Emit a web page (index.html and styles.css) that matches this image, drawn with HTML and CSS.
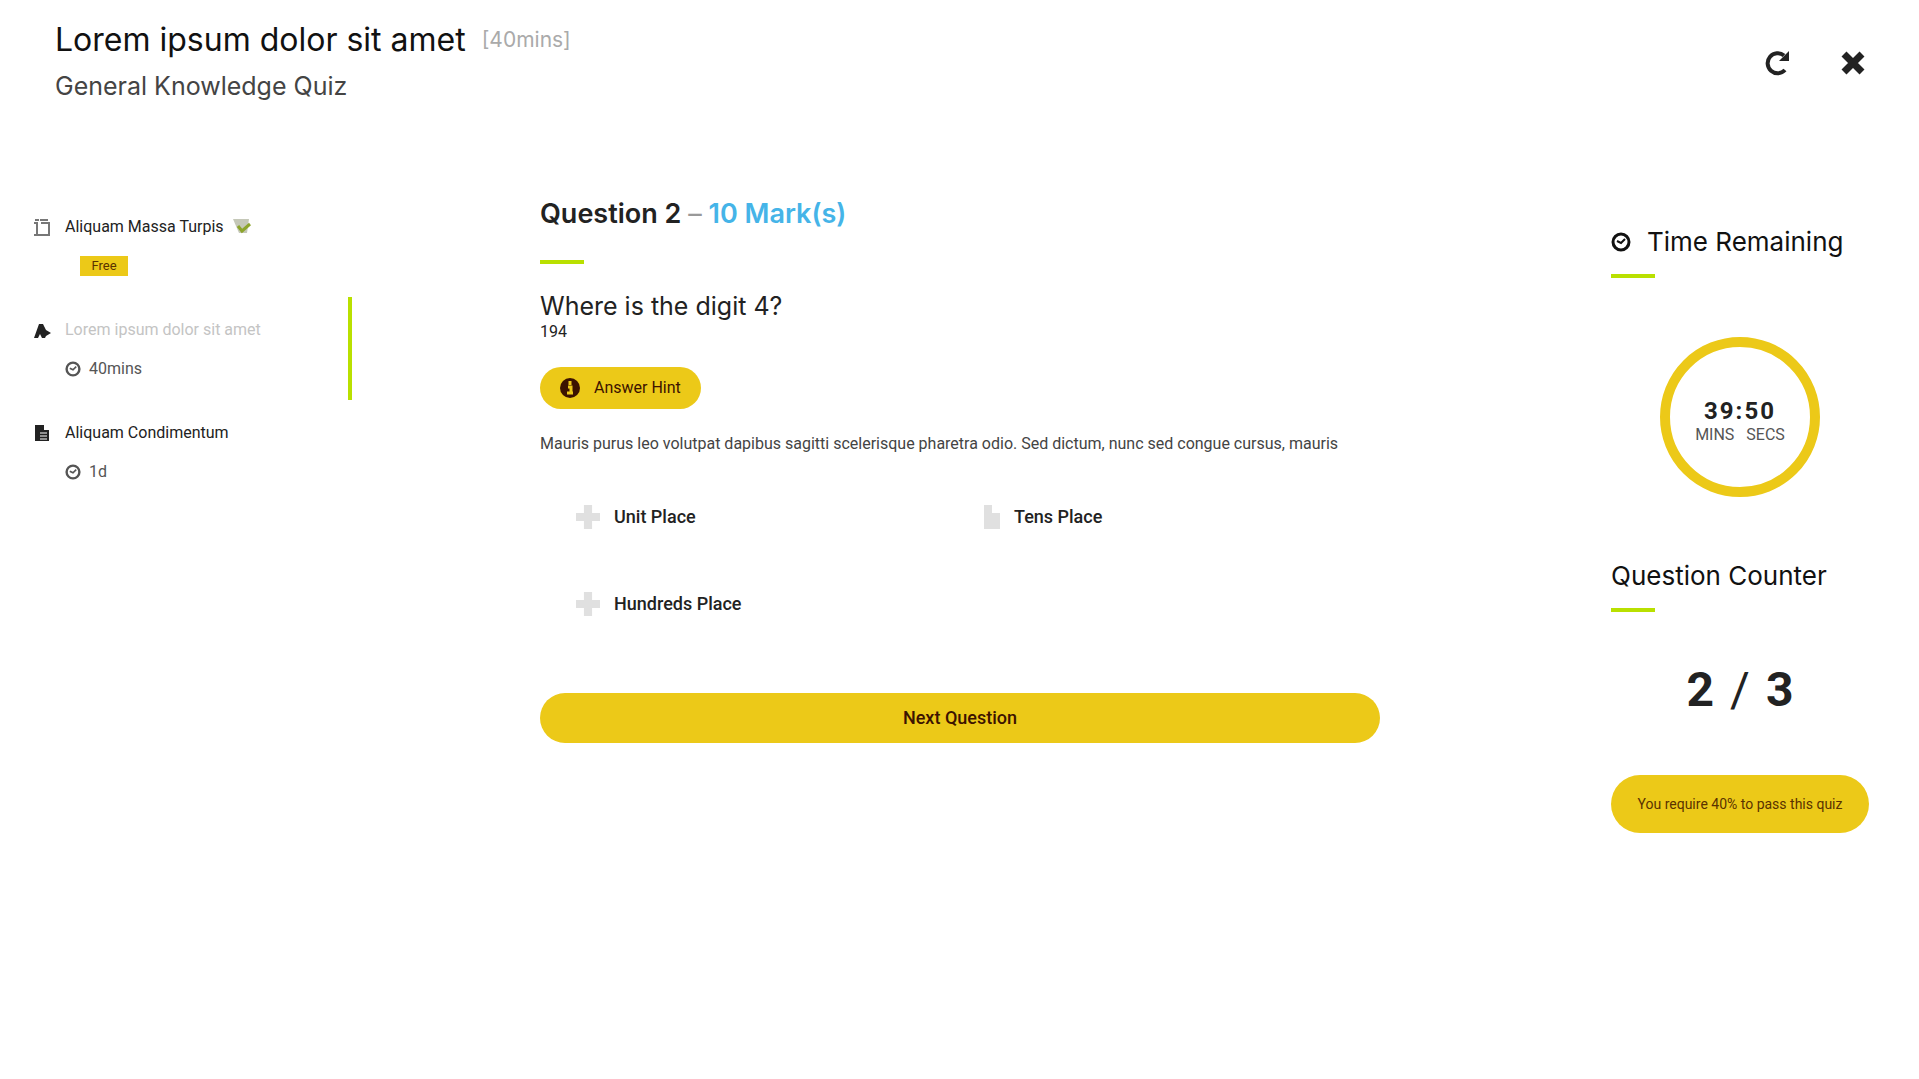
FILE: index.html
```html
<!DOCTYPE html>
<html lang="en">
<head>
<meta charset="utf-8">
<meta name="viewport" content="width=device-width, initial-scale=1">
<title>General Knowledge Quiz</title>
<link rel="stylesheet" href="styles.css">
</head>
<body>
<svg class="sprite" aria-hidden="true">
  <symbol id="clock" viewBox="0 0 20 20"><circle cx="10" cy="10" r="8" fill="none" stroke="currentColor" stroke-width="3"/><path d="M6 9l4 2 4-4" fill="none" stroke="currentColor" stroke-width="2"/></symbol>
</svg>
<header class="topbar">
  <div>
    <h1 class="course">Lorem ipsum dolor sit amet <span class="duration">[40mins]</span></h1>
    <p class="quiz-name">General Knowledge Quiz</p>
  </div>
  <div class="actions">
    <button class="icon-btn" aria-label="Reload"><svg width="28" height="28" viewBox="0 0 28 28"><path d="M22 21A10 10 0 1 1 21 6.500" fill="none" stroke="currentColor" stroke-width="4"/><path d="M26 2v10H16z" fill="currentColor"/></svg></button>
    <button class="icon-btn" aria-label="Close"><svg width="28" height="28" viewBox="0 0 28 28"><path d="M5 5l18 18M23 5L5 23" fill="none" stroke="currentColor" stroke-width="7"/></svg></button>
  </div>
</header>
<div class="layout">
  <nav class="units">
    <a class="unit" href="#">
      <svg class="unit-icon" width="18" height="18" viewBox="0 0 18 18"><path d="M1 5h3v12M1 17h15V5H8M2 2h4M7 2h8" fill="none" stroke="#777" stroke-width="2"/></svg>
      <span class="unit-title">Aliquam Massa Turpis</span>
      <svg class="done" width="20" height="20" viewBox="0 0 20 20"><path d="M1 1h16l-2 14H7z" fill="#c5c8b8"/><path d="M6 8l4 5 8-7" fill="none" stroke="#8da52c" stroke-width="3"/></svg>
      <span class="badge">Free</span>
    </a>
    <a class="unit current" href="#">
      <svg class="unit-icon" width="18" height="18" viewBox="0 0 18 18"><path d="M1 17L6 3h4l3 6 5 3-5 3-1 2H9l-2-4-2 4z" fill="#222"/></svg>
      <span class="unit-title muted">Lorem ipsum dolor sit amet</span>
      <span class="unit-time"><svg width="16" height="16"><use href="#clock"/></svg>40mins</span>
    </a>
    <a class="unit" href="#">
      <svg class="unit-icon" width="18" height="18" viewBox="0 0 18 18"><path d="M2 1h9v5h5v11H2z" fill="#222"/><path d="M7 9h7M7 12h7M7 15h7" stroke="#fff"/></svg>
      <span class="unit-title">Aliquam Condimentum</span>
      <span class="unit-time"><svg width="16" height="16"><use href="#clock"/></svg>1d</span>
    </a>
  </nav>
  <main class="question">
    <h2 class="question-title">Question 2 <span class="dash">–</span> <span class="marks">10 Mark(s)</span></h2>
    <h3 class="prompt">Where is the digit 4?</h3>
    <p class="value">194</p>
    <button class="hint"><svg width="20" height="20" viewBox="0 0 20 20"><circle cx="10" cy="10" r="10" fill="#3c1300"/><path d="M10 3v4M8 9h3v6M7 15h6" fill="none" stroke="#ecc918" stroke-width="3"/></svg>Answer Hint</button>
    <p class="hint-text">Mauris purus leo volutpat dapibus sagitti scelerisque pharetra odio. Sed dictum, nunc sed congue cursus, mauris</p>
    <form class="answers">
      <label class="answer"><input class="choice" type="radio" name="place">Unit Place</label>
      <label class="answer"><input class="choice notch" type="radio" name="place">Tens Place</label>
      <label class="answer"><input class="choice" type="radio" name="place">Hundreds Place</label>
    </form>
    <button class="next">Next Question</button>
  </main>
  <aside class="status">
    <h2 class="status-title"><svg width="20" height="20"><use href="#clock"/></svg>Time Remaining</h2>
    <div class="timer">
      <div class="time">39:50</div>
      <div class="time-units"><span>MINS</span><span>SECS</span></div>
    </div>
    <h2 class="status-title">Question Counter</h2>
    <p class="counter"><b>2</b><span>/</span><b>3</b></p>
    <p class="pass">You require 40% to pass this quiz</p>
  </aside>
</div>
</body>
</html>
```

FILE: styles.css
```css
* { box-sizing: border-box; }
body { margin: 0; background: #fff; color: #222; font: 16px/24px Roboto, sans-serif; }
h1, h2, h3, p { margin: 0; font-family: Inter, sans-serif; font-weight: 400; }
button { border: 0; padding: 0; color: inherit; font: inherit; cursor: pointer; }
a { color: inherit; text-decoration: none; }
svg { flex: none; }
.sprite { position: absolute; width: 0; height: 0; }

.topbar { display: flex; justify-content: space-between; align-items: center; padding: 20px 52px 0 55px; }
.course { display: flex; align-items: center; gap: 16px; font-size: 32px; line-height: 40px; color: #111; }
.duration { font-size: 21px; color: #aaa; }
.quiz-name { padding-top: 8px; font-size: 25px; line-height: 36px; color: #444; }
.actions { display: flex; gap: 48px; padding-top: 2px; }
.icon-btn { display: flex; background: none; }

.layout { display: grid; grid-template-columns: 352px minmax(0, 1fr) 258px; align-items: start; padding: 90px 50px 40px 0; }

.unit { display: grid; grid-template-columns: 18px auto 1fr; column-gap: 14px; align-content: start; height: 103px; padding: 20px 0 0 33px; }
.current { border-right: 4px solid #b9e000; }
.unit-icon { margin-top: 4px; }
.unit-title { font-size: 16px; line-height: 26px; }
.muted { color: #c4c4c4; }
.done { margin: 4px 0 0 -6px; }
.badge { grid-column: 2; justify-self: start; width: 48px; height: 20px; margin: 16px 0 0 15px; background: #ecc918; font-size: 13px; line-height: 20px; text-align: center; color: #5a3200; }
.unit-time { grid-column: 2; display: flex; align-items: center; gap: 8px; padding-top: 14px; line-height: 24px; color: #555; }

.question { padding: 0 231px 0 188px; }
.question-title { font-size: 27px; line-height: 40px; font-weight: 600; }
.dash { font-weight: 400; color: #999; }
.marks { color: #45b4e8; }
.question-title::after, .status-title::after { content: ""; display: block; width: 44px; height: 4px; background: #b9e000; }
.question-title::after { margin-top: 26px; }
.prompt { padding-top: 24px; font-size: 25px; line-height: 36px; }
.value { font: 16px/16px Roboto, sans-serif; }
.hint { display: flex; align-items: center; gap: 14px; height: 42px; margin-top: 27px; padding: 0 20px; border-radius: 21px; background: #ecc918; font-size: 16px; color: #3c1300; }
.hint-text { padding-top: 23px; font: 16px/24px Roboto, sans-serif; color: #444; }
.answers { display: grid; grid-template-columns: 408px 1fr; row-gap: 63px; padding: 49px 0 0 36px; }
.answer { display: flex; align-items: center; gap: 14px; font-size: 18px; line-height: 24px; font-weight: 500; }
.choice { appearance: none; width: 24px; height: 24px; margin: 0; background: #e0e0e0; clip-path: polygon(33% 0, 67% 0, 67% 33%, 100% 33%, 100% 67%, 67% 67%, 67% 100%, 33% 100%, 33% 67%, 0 67%, 0 33%, 33% 33%); }
.notch { width: 16px; clip-path: polygon(0 0, 50% 0, 50% 33%, 100% 33%, 100% 100%, 0 100%); }
.next { width: 100%; height: 50px; margin-top: 77px; border-radius: 25px; background: #ecc918; font-size: 18px; font-weight: 500; color: #3c1300; }

.status { padding-top: 30px; }
.status-title { display: flex; flex-wrap: wrap; align-items: center; column-gap: 16px; font-size: 26px; line-height: 36px; color: #111; }
.status-title::after { flex: none; margin: 14px 100% 0 0; }
.timer { display: flex; flex-direction: column; justify-content: center; width: 160px; height: 160px; margin: 59px auto 61px; padding-top: 12px; border: 10px solid #ecc918; border-radius: 50%; text-align: center; }
.time { font-size: 24px; line-height: 24px; font-weight: 700; letter-spacing: 2px; }
.time-units { display: flex; justify-content: center; gap: 12px; color: #555; }
.counter { display: flex; justify-content: center; gap: 16px; padding-top: 48px; font: 48px/60px Roboto, sans-serif; }
.counter b { font-weight: 700; }
.pass { margin-top: 55px; border-radius: 29px; background: #ecc918; font: 14px/58px Roboto, sans-serif; text-align: center; color: #5a3200; }
```
